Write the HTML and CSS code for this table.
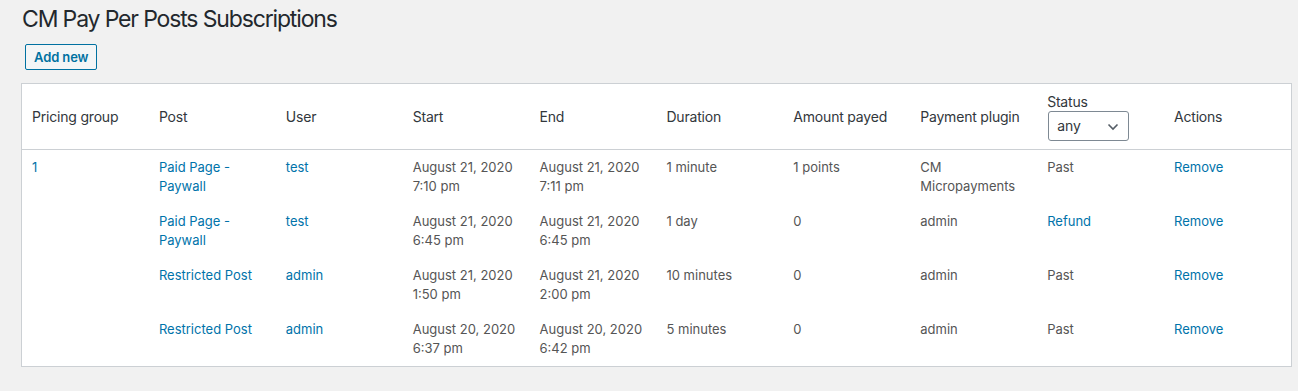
FILE: index.html
```html
<!DOCTYPE html>
<html lang="en">
<head>
<meta charset="utf-8">
<title>CM Pay Per Posts Subscriptions</title>
<link rel="stylesheet" href="styles.css">
</head>
<body>
<div class="wrap">
  <h1 class="page-title">CM Pay Per Posts Subscriptions</h1>
  <div class="actions-bar"><a class="button" href="#">Add new</a></div>
  <table class="subs">
    <colgroup>
      <col><col><col><col><col><col><col><col><col><col>
    </colgroup>
    <thead>
      <tr>
        <th>Pricing group</th>
        <th>Post</th>
        <th>User</th>
        <th>Start</th>
        <th>End</th>
        <th>Duration</th>
        <th>Amount payed</th>
        <th>Payment plugin</th>
        <th class="status-th">
          <div class="status-label">Status</div>
          <div class="select-wrap">
            <select class="status-select"><option>any</option></select>
            <svg class="chev" width="12" height="8" viewBox="0 0 12 8"><path d="M1.5 1.5 L6 6 L10.5 1.5" fill="none" stroke="#555d66" stroke-width="1.6"/></svg>
          </div>
        </th>
        <th>Actions</th>
      </tr>
    </thead>
    <tbody>
      <tr>
        <td><a href="#">1</a></td>
        <td><a href="#">Paid Page - Paywall</a></td>
        <td><a href="#">test</a></td>
        <td>August 21, 2020<br>7:10 pm</td>
        <td>August 21, 2020<br>7:11 pm</td>
        <td>1 minute</td>
        <td>1 points</td>
        <td>CM Micropayments</td>
        <td>Past</td>
        <td><a href="#">Remove</a></td>
      </tr>
      <tr>
        <td></td>
        <td><a href="#">Paid Page - Paywall</a></td>
        <td><a href="#">test</a></td>
        <td>August 21, 2020<br>6:45 pm</td>
        <td>August 21, 2020<br>6:45 pm</td>
        <td>1 day</td>
        <td>0</td>
        <td>admin</td>
        <td><a href="#">Refund</a></td>
        <td><a href="#">Remove</a></td>
      </tr>
      <tr>
        <td></td>
        <td><a href="#">Restricted Post</a></td>
        <td><a href="#">admin</a></td>
        <td>August 21, 2020<br>1:50 pm</td>
        <td>August 21, 2020<br>2:00 pm</td>
        <td>10 minutes</td>
        <td>0</td>
        <td>admin</td>
        <td>Past</td>
        <td><a href="#">Remove</a></td>
      </tr>
      <tr>
        <td></td>
        <td><a href="#">Restricted Post</a></td>
        <td><a href="#">admin</a></td>
        <td>August 20, 2020<br>6:37 pm</td>
        <td>August 20, 2020<br>6:42 pm</td>
        <td>5 minutes</td>
        <td>0</td>
        <td>admin</td>
        <td>Past</td>
        <td><a href="#">Remove</a></td>
      </tr>
    </tbody>
  </table>
</div>
</body>
</html>
```
FILE: styles.css
```css
html, body {
  margin: 0;
  padding: 0;
  background: #f1f1f1;
}
body {
  font-family: Inter, "Liberation Sans", Arial, sans-serif;
  color: #444;
  font-size: 13px;
  line-height: 1.4;
}
.wrap {
  padding: 4px 6px 0 21px;
}
.page-title {
  margin: 0 0 0 1px;
  font-size: 23px;
  font-weight: 400;
  line-height: 30px;
  letter-spacing: -1.15px;
  color: #23282d;
}
.actions-bar {
  margin: 10px 0 13px 4px;
  height: 26px;
}
.button {
  display: inline-block;
  box-sizing: border-box;
  height: 26px;
  padding: 4px 8px;
  border: 1px solid #0071a1;
  border-radius: 2px;
  background: #f3f5f6;
  color: #0071a1;
  font-size: 13px;
  font-weight: 600;
  line-height: 16px;
  letter-spacing: -0.1px;
  text-decoration: none;
}
.subs {
  width: 100%;
  table-layout: fixed;
  border-collapse: separate;
  border-spacing: 0;
  background: #fff;
  border: 1px solid #ccd0d4;
}
.subs th {
  text-align: left;
  font-weight: 400;
  font-size: 14px;
  letter-spacing: -0.2px;
  color: #32373c;
  padding: 8px 10px;
  height: 48px;
  vertical-align: middle;
  border-bottom: 1px solid #ccd0d4;
  line-height: 19px;
}
.subs td {
  padding: 8px 10px;
  vertical-align: top;
  line-height: 19px;
  height: 38px;
  color: #555;
  font-size: 13px;
}
.subs a {
  color: #0073aa;
  text-decoration: none;
}
.status-label {
  line-height: 19px;
}
.select-wrap {
  position: relative;
  width: 81px;
  height: 30px;
  margin-left: 1px;
}
.status-select {
  appearance: none;
  -webkit-appearance: none;
  box-sizing: border-box;
  width: 81px;
  height: 30px;
  border: 1px solid #7e8993;
  border-radius: 3px;
  background: #fff;
  color: #32373c;
  font-family: inherit;
  font-size: 14px;
  padding: 0 24px 0 8px;
  line-height: 28px;
}
.chev {
  position: absolute;
  right: 10px;
  top: 12px;
  pointer-events: none;
}
```
